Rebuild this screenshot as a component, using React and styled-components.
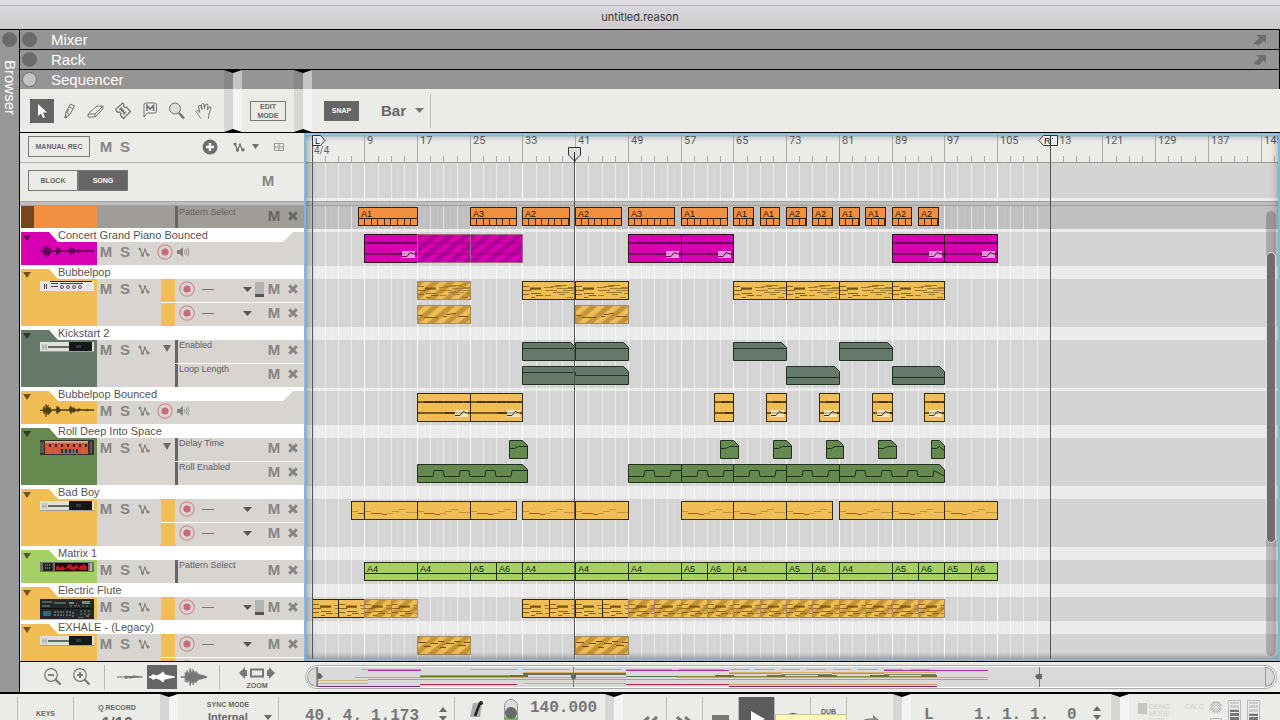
import styled, { createGlobalStyle, css } from "styled-components";

const BAR = 6.59;
const ORIGIN = 6.1;
const xAt = (bar) => Math.floor(ORIGIN + (bar - 1) * BAR);

const YELLOW = "#f0be55";
const MAGENTA = "#d900b3";
const ORANGE = "#f28f40";
const SLATE = "#65796a";
const GREEN = "#65894e";
const LIME = "#a5d164";

// one clip for each step of bars between from and to
const every = (from, to, step, extra = {}) => {
  const list = [];
  for (let b = from; b < to; b += step) list.push({ s: b, e: Math.min(b + step, to), ...extra });
  return list;
};

const patternClips = [
  [8, 17, "A1"], [25, 32, "A3"], [33, 40, "A2"], [41, 48, "A2"], [49, 56, "A3"], [57, 64, "A1"],
  [65, 68, "A1"], [69, 72, "A1"], [73, 76, "A2"], [77, 80, "A2"], [81, 84, "A1"], [85, 88, "A1"],
  [89, 92, "A2"], [93, 96, "A2"],
].map(([s, e, label]) => ({ s, e, label, ticks: true }));

const matrixClips = [
  [9, 17, "A4"], [17, 25, "A4"], [25, 29, "A5"], [29, 33, "A6"], [33, 41, "A4"], [41, 49, "A4"],
  [49, 57, "A4"], [57, 61, "A5"], [61, 65, "A6"], [65, 73, "A4"], [73, 77, "A5"], [77, 81, "A6"],
  [81, 89, "A4"], [89, 93, "A5"], [93, 97, "A6"], [97, 101, "A5"], [101, 105, "A6"],
].map(([s, e, label]) => ({ s, e, label }));

const tracks = [
  {
    name: "Concert Grand Piano Bounced", color: MAGENTA, kind: "audio", device: "wave",
    lanes: [{ clips: [
      { s: 9, e: 17, art: "audio", fade: true },
      ...every(17, 33, 8, { art: "audio", muted: true }),
      ...every(49, 65, 8, { art: "audio", fade: true }),
      ...every(89, 105, 8, { art: "audio", fade: true }),
    ] }],
  },
  {
    name: "Bubbelpop", color: YELLOW, kind: "note", device: "synth",
    lanes: [
      { level: true, clips: [
        { s: 17, e: 25, art: "dense", muted: true },
        ...every(33, 49, 8, { art: "dense" }),
        ...every(65, 97, 8, { art: "dense" }),
      ] },
      { clips: [{ s: 17, e: 25, art: "sparse", muted: true }, { s: 41, e: 49, art: "sparse", muted: true }] },
    ],
  },
  {
    name: "Kickstart 2", color: SLATE, kind: "auto", device: "rack", arrow: true,
    lanes: [
      { label: "Enabled", clips: [
        { s: 33, e: 41, curve: [[0, 6], [1, 6]] }, { s: 41, e: 49, curve: [[0, 6], [1, 6]] },
        { s: 65, e: 73, curve: [[0, 6], [1, 6]] }, { s: 81, e: 89, curve: [[0, 6], [1, 6]] },
      ] },
      { label: "Loop Length", clips: [
        { s: 33, e: 49, curve: [[0, 6], [0.5, 6], [0.5, 9], [1, 9]] },
        { s: 73, e: 81, curve: [[0, 11], [1, 11]] }, { s: 89, e: 97, curve: [[0, 11], [1, 11]] },
      ] },
    ],
  },
  {
    name: "Bubbelpop Bounced", color: YELLOW, kind: "audio", device: "wave",
    lanes: [{ clips: [
      ...every(17, 33, 8, { art: "audio", fade: true }),
      { s: 62, e: 65, art: "audio" },
      ...[70, 78, 86, 94].map((s) => ({ s, e: s + 3, art: "audio", fade: true })),
    ] }],
  },
  {
    name: "Roll Deep Into Space", color: GREEN, kind: "auto", device: "red", arrow: true,
    lanes: [
      { label: "Delay Time", clips: [
        ...[31, 63, 71, 79, 87].map((s) => ({ s, e: s + 2.7, curve: [[0, 8], [0.3, 8], [0.5, 6], [1, 6]] })),
        { s: 95, e: 97, curve: [[0, 8], [0.4, 8], [0.6, 6], [1, 11]] },
      ] },
      { label: "Roll Enabled", clips: [
        { s: 17, e: 33.7, pulses: 4 },
        ...every(49, 81, 8, { pulses: 2 }),
        { s: 81, e: 97, pulses: 4, tail: true },
      ] },
    ],
  },
  {
    name: "Bad Boy", color: YELLOW, kind: "note", device: "rack",
    lanes: [
      { clips: [
        { s: 7, e: 9, art: "bass" }, ...every(9, 32, 8, { art: "bass" }), ...every(33, 49, 8, { art: "bass" }),
        ...every(57, 80, 8, { art: "bass" }), ...every(81, 105, 8, { art: "bass" }),
      ] },
      { clips: [] },
    ],
  },
  {
    name: "Matrix 1", color: LIME, kind: "auto", device: "matrix",
    lanes: [{ label: "Pattern Select", clips: matrixClips }],
  },
  {
    name: "Electric Flute", color: YELLOW, kind: "note", device: "modules",
    lanes: [{ level: true, clips: [
      ...every(1, 9, 4, { art: "dense" }), ...every(9, 17, 4, { art: "dense", muted: true }),
      ...every(33, 49, 4, { art: "dense" }), ...every(49, 97, 4, { art: "dense", muted: true }),
    ] }],
  },
  {
    name: "EXHALE - (Legacy)", color: YELLOW, kind: "note", device: "rack",
    lanes: [
      { clips: [{ s: 17, e: 25, art: "chords", muted: true }, { s: 41, e: 49, art: "chords", muted: true }] },
      { clips: [], empty: true },
    ],
  },
];

// x1, x2, y, colour, thickness
const overviewLines = [
  ...[[362, 421], [471, 517], [523, 570], [575, 621], [626, 672], [678, 724], [730, 749], [755, 774], [781, 800], [807, 826], [833, 851], [858, 877], [884, 903], [910, 930]]
    .map(([a, b]) => [a, b, 2, "#d99a68"]),
  [368, 421, 3, "#b52ba0"], [626, 729, 3, "#b52ba0"], [884, 988, 3, "#b52ba0"],
  [523, 626, 5, "#d8b06a"], [729, 936, 5, "#d8b06a"],
  [523, 626, 6, "#5f7468", 2], [729, 781, 6, "#8b9a90"], [832, 884, 6, "#8b9a90"], [781, 832, 7, "#76867c"], [884, 936, 7, "#76867c"],
  [420, 523, 8, "#a89a3c"], [626, 936, 9, "#8e8a30"], [510, 528, 8, "#77721e", 2],
  [715, 734, 8, "#77721e", 2], [767, 785, 8, "#77721e", 2], [818, 837, 8, "#77721e", 2], [870, 889, 8, "#77721e", 2], [921, 937, 8, "#77721e", 2],
  [355, 626, 10, "#c9ac62"], [677, 988, 10, "#c9ac62"], [420, 523, 9, "#77721e"], [626, 678, 9, "#4c7a45"],
  [368, 988, 12, "#94b36d"], [317, 368, 13, "#cdb57c"], [317, 368, 16, "#cdb57c"],
  [523, 626, 16, "#d8b06a"], [420, 517, 17, "#b01f55"], [626, 729, 17, "#c01f45"], [729, 937, 17, "#c9a060"],
  [317, 420, 19, "#801c82"], [729, 937, 19, "#8e1b62"],
];

const Svg = ({ w, h, children, ...rest }) => (
  <svg width={w} height={h} viewBox={`0 0 ${w} ${h}`} aria-hidden="true" {...rest}>{children}</svg>
);

const Caret = ({ w = 9, h = 5, color = "#6b6b6b" }) => (
  <Svg w={w} h={h}><path d={`M0 0H${w}L${w / 2} ${h}Z`} fill={color} /></Svg>
);

const RecordIcon = () => (
  <Svg w={16} h={16}>
    <circle cx="8" cy="8" r="7.200" fill="none" stroke="#d28c93" strokeWidth="1.200" />
    <circle cx="8" cy="8" r="3.600" fill="#c66b7b" />
  </Svg>
);

const AutomationIcon = ({ color = "#858585" }) => (
  <Svg w={12} h={12}>
    <path d="M2 3L4.500 9.500L7 3.500L9.500 9.500" fill="none" stroke={color} strokeWidth="1.200" />
    <g fill={color}><circle cx="2" cy="3" r="1.500" /><circle cx="4.500" cy="9.300" r="1.500" /><circle cx="7" cy="3.500" r="1" /><circle cx="10" cy="8.800" r="1.600" /></g>
  </Svg>
);

const CrossIcon = () => (
  <Svg w={10} h={10}><path d="M1.200 1.200L8.800 8.800M8.800 1.200L1.200 8.800" stroke="currentColor" strokeWidth="3" /></Svg>
);

const SpeakerIcon = () => (
  <Svg w={14} h={12}>
    <path d="M1 4H3.500L7 1V11L3.500 8H1Z" fill="#858585" />
    <path d="M8.500 4Q9.500 6 8.500 8M10 2.500Q12 6 10 9.500M11.800 1.500Q14 6 11.800 10.500" fill="none" stroke="#9a9a9a" />
  </Svg>
);

const PopOutIcon = () => (
  <Svg w={14} h={11}><path d="M3 1H13V9L10.500 6.500L6 11L0 10L6.500 3.800Z" fill="#6d6d6d" /></Svg>
);

const StepArrows = () => (
  <Svg w={10} h={14}><path d="M1 5L5 0L9 5ZM1 9H9L5 14Z" fill="#6b6b6b" /></Svg>
);

const wavePath = "M0 7H3L4 3L5 7L6 1L7 5L8 2L9 6L10 4L11 6.500H16L17 3L18 5L19 4L20 6.500H29L30 4L31 3L32 5L34 4.500L35 6L37 6.500L39 5.500L41 6.500H46L47 6L49 6.500H54V7.500H49L47 8L45 7.500H40L38 8.500L36 7.500L34 9.500L32 8.500L31 11L30 9L29 7.500H21L19 9.500L18 9L17 11L16 7.500H12L10 10L8 12L7 9L6 14L5 8L4 11L3 7.500H0Z";

const DeviceArt = ({ type, color }) => {
  switch (type) {
    case "wave":
      return <Svg w={54} h={15}><path d={wavePath} fill={color === MAGENTA ? "#5e0b55" : "#4e3b12"} stroke={color === MAGENTA ? "#5e0b55" : "#4e3b12"} strokeWidth=".5" /></Svg>;
    case "synth":
      return (
        <Svg w={54} h={10}>
          <rect width="54" height="10" fill="#e8e6e2" />
          <path d="M10 0H52V1H10Z" fill="#232323" />
          <path d="M4 3H5V8H4ZM6 3H7V8H6ZM11 2H18V3H11ZM11 5H18V6H11ZM20 2H43V3H20Z" fill="#444" />
          {[22, 28, 34, 40].map((x) => <circle key={x} cx={x} cy="6" r="1.500" fill="none" stroke="#555" />)}
        </Svg>
      );
    case "red":
      return (
        <Svg w={54} h={15}>
          <rect width="54" height="15" fill="#37302c" />
          <rect x="5" y="1" width="43" height="13" fill="#d6583a" />
          <path d="M5 1H48V3H5Z" fill="#dd9a86" />
          {[9, 15, 21, 27, 33, 39, 45].map((x) => <path key={x} d={`M${x} 4h2v3h-2z`} fill="#4b2119" />)}
          <path d="M21 9H38V13H21Z" fill="#33302f" />
          <path d="M10 9V14M15 9V14M43 9V14M1 2V13M3 2V13M51 2V13" stroke="#8d7c70" />
          <path d="M24 9V13M28 9V13M32 9V13M35 9V13" stroke="#b9b3ac" />
        </Svg>
      );
    case "matrix":
      return (
        <Svg w={54} h={10}>
          <rect width="54" height="10" fill="#6f726c" />
          <rect x="3" y="1" width="10" height="8" fill="#242424" />
          <rect x="15" y="1" width="33" height="8" fill="#2a0508" />
          <path d="M16 8V5L19 3V6L23 4L25 7L28 3L31 2L33 5L36 3L40 6V4L44 2L47 5V8H40L38 6L35 8H31L28 6L24 8Z" fill="#c31524" />
          <path d="M5 3H11M5 6H11" stroke="#aaa" strokeDasharray="1 1" />
          <path d="M50 1H52V9H50Z" fill="#b4b4ae" />
        </Svg>
      );
    case "modules":
      return (
        <Svg w={54} h={20}>
          <rect width="54" height="20" fill="#23292a" />
          <path d="M2 2H12V4H2ZM14 3H26V5H14ZM2 6H10V8H2Z" fill="#506258" />
          <path d="M29 3H34V5H29ZM42 2H50V5H42Z" fill="#7c8a83" />
          <path d="M1 9.500H53" stroke="#0d0f10" />
          <path d="M3 12H11V17H3Z" fill="#34637e" />
          <path d="M14 13H24M14 16H24M27 12V18M30 12V18M33 13V18" stroke="#9aa69f" strokeDasharray="2 1" />
          <path d="M36 4H37V7H36ZM46 16H49V18H46ZM38 18H44V19H38Z" fill="#c23a36" />
          <path d="M40 12H50M40 15H50M30 7H50" stroke="#5e9277" strokeDasharray="2 2" />
        </Svg>
      );
    default:
      return (
        <Svg w={54} h={10}>
          <rect width="54" height="10" fill="#e0dfdb" />
          <path d="M8 5H29" stroke="#3d4341" strokeWidth="1.500" />
          <path d="M3 2V8M6 2V8M2 5H7" stroke="#a3a3a0" />
          <rect x="29" width="23" height="9" fill="#161818" />
          <rect x="36" y="3" width="5" height="3" fill="#2e3d49" />
          <path d="M0 9.500H54" stroke="#9a9a96" />
        </Svg>
      );
  }
};

const ClipArt = ({ clip, width, color }) => {
  const dark = color === MAGENTA ? "#63004f" : "#4a3410";
  if (clip.art === "audio") {
    return (
      <Svg w={width} h={27}>
        <path d={`M0 8H${width}M0 19H${width}`} stroke={dark} strokeWidth={clip.muted ? 1 : 1.5} opacity={clip.muted ? 0.5 : 1} />
        {!clip.muted && <path d={`M6 8H${width}M${width * 0.5} 19h12`} stroke={dark} strokeWidth="2" strokeDasharray="9 1" />}
        {clip.fade && (
          <g>
            <rect x={width - 17} y="16" width="13" height="7" fill="#fff" opacity="0.6" />
            <path d={`M${width - 17} 21.500h5l3 -4l6 2`} fill="none" stroke={dark} />
          </g>
        )}
      </Svg>
    );
  }
  if (clip.art === "dense") {
    return (
      <Svg w={width} h={17} opacity={clip.muted ? 0.7 : 0.85}>
        <path d="M0 4.500H6M0 8.500H8M7 7H18M0 12.500H6M8 11.500H18M8 15.500H12M13 13.500H20" stroke="#6e5013" strokeWidth="1" />
        <path d="M7 6.500H18" stroke="#5a3f0c" strokeWidth="2" />
        <path d="M21 5.500H30M22 8.500H34M22 13.500H28M28 4.500H38M32 3.500H44M30 10.500H46M34 6.500H52M40 8.500H52M36 12.500H42M45 5.500H52M44 15.500H50M48 11.500H53" stroke="#92702a" />
      </Svg>
    );
  }
  if (clip.art === "sparse" || clip.art === "chords") {
    return (
      <Svg w={width} h={17}>
        {clip.art === "sparse"
          ? <path d="M0 9.500H5M6 11.500H20M25 10.500H29M28 8.500H33M33 7.500H38M40 10.500H50" stroke="#7a5a1a" />
          : <path d="M0 5.500H8M6 9.500H13M13 6.500H20M20 4.500H26M22 10.500H28M28 6.500H36M36 4.500H42M40 8.500H48M46 5.500H53" stroke="#6a4d14" />}
      </Svg>
    );
  }
  return (
    <Svg w={width} h={17}>
      <path d="M0 9.500H6M22 11.500H28M27 9.500H34M33 7.500H40M41 10.500H52" stroke="#c39540" />
      <path d="M6 11.500H16L18 12.500H22" fill="none" stroke="#8a6420" />
    </Svg>
  );
};

const curvePoints = (clip, width) => {
  if (clip.curve) return clip.curve.map(([x, y]) => `${x * width},${y + 0.5}`).join(" ");
  const step = 26;
  let points = "0,12.500";
  for (let i = 0; i < clip.pulses; i++) {
    const a = 16 + i * step;
    points += ` ${a},12.500 ${a + 1},6.500`;
    if (i < clip.pulses - 1) points += ` ${a + 10},6.500 ${a + 11},12.500`;
  }
  return `${points} ${width},${clip.tail ? 12.5 : 6.5}`;
};

const AutomationArt = ({ clip, width, color, cut }) => (
  <Svg w={width} h={19}>
    <path d={cut ? `M.5 .5H${width - 5.5}L${width - 0.5} 5.500V18.500H.5Z` : `M.5 .5H${width - 0.5}V18.500H.5Z`} fill={color} stroke="#22301f" />
    <polyline points={curvePoints(clip, width)} fill="none" stroke="#22301f" />
  </Svg>
);

const TimelineClip = ({ clip, color, tall, cut }) => {
  const left = xAt(clip.s);
  const width = xAt(clip.e) - left + 1;
  if (clip.curve || clip.pulses) {
    return (
      <BareClip style={{ left, width }}>
        <AutomationArt clip={clip} width={width} color={color} cut={cut} />
      </BareClip>
    );
  }
  return (
    <Clip $color={color} $tall={tall} $muted={clip.muted} style={{ left, width }}>
      {clip.label
        ? <><ClipLabel>{clip.label}</ClipLabel><ClipFoot $ticks={clip.ticks} /></>
        : <ClipArt clip={clip} width={width} color={color} />}
    </Clip>
  );
};

const LaneTail = ({ track }) => (
  <>
    <LetterButton aria-label={`Mute lane of ${track}`}>M</LetterButton>
    <IconButton aria-label={`Delete lane of ${track}`}><CrossIcon /></IconButton>
  </>
);

const Track = ({ track }) => (
  <TrackRow>
    <ColorCell $color={track.color}>
      <FoldButton aria-label={`Fold ${track.name}`}><Caret w={8} h={6} color="rgba(0,0,0,.55)" /></FoldButton>
      <Device><DeviceArt type={track.device} color={track.color} /></Device>
    </ColorCell>
    <TrackName>{track.name}</TrackName>
    {track.kind === "audio" && <Notch />}
    <Controls>
      <LetterButton aria-label={`Mute ${track.name}`}>M</LetterButton>
      <LetterButton aria-label={`Solo ${track.name}`}>S</LetterButton>
      <IconButton aria-label={`Automation of ${track.name}`}><AutomationIcon /></IconButton>
      {track.kind === "audio" && (
        <AudioControls>
          <IconButton aria-label={`Record ${track.name}`}><RecordIcon /></IconButton>
          <IconButton aria-label={`Monitor ${track.name}`}><SpeakerIcon /></IconButton>
        </AudioControls>
      )}
    </Controls>
    {track.kind !== "audio" && (
      <Lanes>
        {track.lanes.map((lane, i) => (
          <LaneRow key={i}>
            <Strip $color={track.kind === "note" ? track.color : null}>
              {track.arrow && i === 0 && <Caret w={8} h={7} />}
            </Strip>
            {track.kind === "note" ? (
              <NoteLane>
                <IconButton aria-label={`Record lane ${i + 1} of ${track.name}`}><RecordIcon /></IconButton>
                {!lane.empty && (
                  <>
                    <Dash />
                    <Caret color="#555" />
                    {lane.level ? <Level /> : <span />}
                    <LaneTail track={track.name} />
                  </>
                )}
              </NoteLane>
            ) : (
              <AutomationLane>
                <LaneLabel>{lane.label}</LaneLabel>
                <LaneTail track={track.name} />
              </AutomationLane>
            )}
          </LaneRow>
        ))}
      </Lanes>
    )}
  </TrackRow>
);

const Ruler = () => {
  const ticks = [];
  for (let b = 1; b <= 147; b += 2) ticks.push(b);
  return (
    <RulerBar>
      {ticks.map((b) => {
        const major = (b - 1) % 8 === 0;
        return (
          <Tick key={b} $major={major} style={{ left: xAt(b) }}>{major && b > 1 ? b : ""}</Tick>
        );
      })}
      <Signature>4/4</Signature>
    </RulerBar>
  );
};

const gridBars = Array.from({ length: 111 }, (_, i) => i + 1);

const Timeline = () => (
  <TimelinePane>
    <Ruler />
    <BlockLane />
    <SplitBar />
    <GridLines aria-hidden="true">
      {gridBars.map((b) => (
        <rect key={b} x={xAt(b)} y="0" width="1" height="100%" fill="#fff" opacity={(b - 1) % 8 === 0 ? 0.9 : b % 2 ? 0.5 : 0.1} />
      ))}
    </GridLines>
    <FoldedLane>{patternClips.map((c) => <TimelineClip key={c.s} clip={c} color={ORANGE} />)}</FoldedLane>
    {tracks.map((t) => (
      <TimelineTrack key={t.name} $audio={t.kind === "audio"}>
        {t.lanes.map((lane, i) => (
          <TimelineLane key={i} $audio={t.kind === "audio"}>
            {lane.clips.map((c, j) => (
              <TimelineClip
                key={c.s} clip={c} color={t.color} tall={t.kind === "audio"}
                cut={!c.pulses || j === 0 || j === lane.clips.length - 1}
              />
            ))}
          </TimelineLane>
        ))}
      </TimelineTrack>
    ))}
    <InnerShade />
    <MarkerLine style={{ left: xAt(1) }} />
    <MarkerLine style={{ left: xAt(113) }} />
    <MarkerLine $playhead style={{ left: xAt(41) - 1 }} />
    <LocatorFlag style={{ left: xAt(1) }}>
      <Svg w={14} h={11}>
        <path d="M.5 .5H8.500L13 5.500L8.500 10.500H.5Z" fill="#eee" stroke="#333" />
        <text x="3" y="9" fontSize="9" fill="#222">L</text>
      </Svg>
    </LocatorFlag>
    <LocatorFlag style={{ left: xAt(113) - 12 }}>
      <Svg w={20} h={11}>
        <path d="M19.500 .5H5.500L1 5.500L5.500 10.500H19.500Z" fill="#eee" stroke="#333" />
        <text x="6" y="9" fontSize="9" fill="#222">R</text>
        <path d="M12.500 1V10M14 3.500H15" stroke="#333" />
      </Svg>
    </LocatorFlag>
    <PlayheadFlag style={{ left: xAt(41) - 7 }}>
      <Svg w={13} h={15}>
        <path d="M.5 .5H12.500V8L6.500 14L.5 8Z" fill="#dcdcdc" stroke="#333" />
        <path d="M6.500 5V15" stroke="#222" />
      </Svg>
    </PlayheadFlag>
    <Scrollbar><ScrollThumb /></Scrollbar>
  </TimelinePane>
);

const Toolbar = () => (
  <SequencerTop>
    <Section $width={204}>
      <SectionHead><Dot $open />Sequencer</SectionHead>
      <Tools>
        <ToolButton $active aria-label="Selection tool">
          <Svg w={24} h={24}><path d="M8 5V17L11 14.500L13 19L15 18L13 13.500H17Z" fill="#fff" /></Svg>
        </ToolButton>
        <ToolButton aria-label="Pencil tool">
          <Svg w={24} h={24} fill="none" stroke="#737373"><path d="M8 19L9 13L13.500 5L17.500 7L13 15.500ZM9 13L13 15.500M12 7.500L16 10M12 10L10.500 13" /><path d="M8 19L8.500 16.500L10 17.500Z" fill="#737373" /></Svg>
        </ToolButton>
        <ToolButton aria-label="Eraser tool">
          <Svg w={24} h={24} fill="none" stroke="#737373"><path d="M4 15L13 7H19L11 15ZM4 15V18H11V15M11 18L19 10V7" /></Svg>
        </ToolButton>
        <ToolButton aria-label="Razor tool">
          <Svg w={24} h={24} fill="none" stroke="#737373" strokeWidth="1.200"><path d="M11.500 4L13 5.500L12.500 7L14 8.500L15.500 8L19.500 12.500L12.500 19.500L9.500 16L10 14.500L8.500 13L7 13.500L4.500 10.500ZM9 9L14 15" /><circle cx="11.500" cy="11.500" r="1" /><path d="M8.500 11L11 8.500M12 15.500L15 12.500" /></Svg>
        </ToolButton>
        <ToolButton aria-label="Mute tool">
          <Svg w={24} h={24} fill="none" stroke="#737373"><path d="M7.500 4H16.500Q18.500 4 18.500 6V12Q18.500 14 16.500 14H9.500L6 18V6Q6 4 7.500 4Z" /><path d="M9 12V6.500L12.200 10L15.500 6.500V12" strokeWidth="1.600" /></Svg>
        </ToolButton>
        <ToolButton aria-label="Magnifier tool">
          <Svg w={24} h={24} fill="none" stroke="#737373"><circle cx="10" cy="9.500" r="5.500" fill="#dcdcd8" /><path d="M14 14L19 19.500" strokeWidth="2.600" /></Svg>
        </ToolButton>
        <ToolButton aria-label="Hand tool">
          <Svg w={24} h={24} fill="none" stroke="#737373"><path d="M8.500 19.500C7.500 16.500 5 14.500 4 12.500C4.500 11 6 11.500 8 13.500L6.500 8Q6.500 6 8.500 6.500L10 10.500L9.500 5.500Q10.500 3.500 12 5L12.500 10L13.500 5.500Q15 4 16 6L15.500 11L17 8Q19 7 19 9L17 15L16.500 19.500" /></Svg>
        </ToolButton>
      </Tools>
    </Section>
    <Fold />
    <Section $width={52}>
      <SectionHead />
      <Tools $center><OutlineButton $wide>EDIT<br />MODE</OutlineButton></Tools>
    </Section>
    <Fold />
    <Section>
      <SectionHead $end />
      <Tools $snap>
        <DarkButton>SNAP</DarkButton>
        <SnapField>
          <SnapSelect aria-label="Snap value" defaultValue="Bar"><option>Bar</option></SnapSelect>
          <Caret color="#777" />
        </SnapField>
      </Tools>
    </Section>
  </SequencerTop>
);

const Glass = ({ plus }) => (
  <Svg w={20} h={20} fill="none" stroke="#777">
    <circle cx="8" cy="8" r="6.300" strokeWidth="1.200" /><path d="M5 8H11" strokeWidth="1.800" />
    {plus && <path d="M8 5V11" strokeWidth="1.800" />}
    <path d="M12.500 12.500L17.500 17.500" strokeWidth="2.200" />
  </Svg>
);

const ZoomBar = () => (
  <ZoomRow>
    <ZoomTools>
      <IconButton aria-label="Zoom out"><Glass /></IconButton>
      <IconButton aria-label="Zoom in"><Glass plus /></IconButton>
    </ZoomTools>
    <Rule />
    <WaveTools>
      <WaveButton aria-label="Small waveforms"><Svg w={28} h={16}><path d="M1 7.500H8L10 6.500L12 7H16L17 6.500L27 7.500V8.500L17 9L15 9.500L12 9L10 10L8 8.500H1Z" fill="#777" /></Svg></WaveButton>
      <WaveButton $active aria-label="Medium waveforms"><Svg w={28} h={16}><path d="M1 7H3L5 5L8 6.500L12 5L15 2.500L17 5.500L27 7.500V8.500L17 10.500L15 13.500L12 11L8 9.500L5 11L3 9H1Z" fill="#fff" /></Svg></WaveButton>
      <WaveButton aria-label="Large waveforms"><Svg w={28} h={20}><path d="M1 9.500H5V5L6 8L7 3L9 7L10 1L12 6L13 2L15 6L16 4L18 7L27 9.500V10.500L18 13L16 16L15 14L13 18L12 14L10 19L9 13L7 16L6 12L5 15V10.500H1Z" fill="#777" stroke="#777" strokeWidth=".5" /></Svg></WaveButton>
    </WaveTools>
    <Rule />
    <ZoomButton>
      <Svg w={36} h={12}><path d="M0 6L6 0V3H8V9H6V12ZM36 6L30 0V3H28V9H30V12Z" fill="#777" /><rect x="12" y="2.500" width="12" height="7" fill="none" stroke="#777" strokeWidth="2" /></Svg>
      ZOOM
    </ZoomButton>
    <Overview>
      <OverviewCap />
      <OverviewMap aria-hidden="true">
        {overviewLines.map(([a, b, y, color, h = 1], i) => (
          <rect key={i} x={a - 317} y={y} width={b - a} height={h} fill={color} />
        ))}
        <path d="M.5 0V20M256.500 0V20M722.500 0V20" stroke="#777" />
        <path d="M1 6H3L6 9.500L3 12H1ZM254 7H259V11L256.500 13L254 11ZM718 9.500L720 7H725V12H720Z" fill="#666" />
      </OverviewMap>
      <OverviewCap $right />
    </Overview>
  </ZoomRow>
);

const Transport = () => (
  <TransportBar>
    <Panel $width={160}>
      <Group $width={18} />
      <Group $width={56} $top={12}><Tiny>KEYS</Tiny></Group>
      <Group $width={86} $top={6} $last><Tiny>Q RECORD</Tiny><QuantizeValue>1/16</QuantizeValue></Group>
    </Panel>
    <Fold $short />
    <Panel $width={427}>
      <Group $width={101}>
        <Tiny>SYNC MODE</Tiny>
        <SyncRow>
          <SyncSelect aria-label="Sync mode" defaultValue="Internal"><option>Internal</option></SyncSelect>
          <Caret w={8} h={5} />
        </SyncRow>
      </Group>
      <PositionGroup>
        <Digits>40.</Digits><Digits>4.</Digits><Digits>1.173</Digits><StepArrows />
      </PositionGroup>
      <TempoGroup>
        <ClickButton aria-label="Click">
          <Svg w={16} h={22}><path d="M4 4H13L11 18H1Z" fill="#aaa" /><path d="M6 17L11 4" stroke="#222" strokeWidth="2.500" /><circle cx="12" cy="4" r="2" fill="#222" /></Svg>
        </ClickButton>
        <IconButton aria-label="Metronome level">
          <Svg w={14} h={26}><rect x=".5" y=".5" width="13" height="34" rx="6.500" fill="#ddd" stroke="#999" /><path d="M1 18H13V26H1Z" fill="#6fbf58" /><circle cx="7" cy="14" r="6" fill="#6a6a6a" /></Svg>
        </IconButton>
        <Digits>140.000</Digits>
      </TempoGroup>
    </Panel>
    <Fold $short />
    <Panel $width={270}>
      <Group $width={44} $top={19} $end><Svg w={18} h={14}><path d="M9 1L2 7L9 13M17 1L10 7L17 13" fill="none" stroke="#777" strokeWidth="3" /></Svg></Group>
      <Group $width={36} $top={19}><Svg w={18} h={14}><path d="M1 1L8 7L1 13M9 1L16 7L9 13" fill="none" stroke="#777" strokeWidth="3" /></Svg></Group>
      <Group $width={36} $top={18}><StopSquare /></Group>
      <Group $width={36} $top={14} $dark><Svg w={16} h={22}><path d="M2 0L16 8L2 16Z" fill="#fff" /></Svg></Group>
      <Group $width={36} $top={16}>
        <Svg w={16} h={16}><circle cx="8" cy="8" r="8" fill="#b31f2c" /></Svg>
        <Tooltip />
      </Group>
      <Group $width={36} $top={10}><Tiny>DUB</Tiny></Group>
      <Group $width={46} $top={17} $last><Svg w={22} h={14}><path d="M2 13Q3 6 10 6H16" fill="none" stroke="#888" strokeWidth="3" /><path d="M14 1L20 6L14 11Z" fill="#888" /></Svg></Group>
    </Panel>
    <Fold $short />
    <Panel $width={200}>
      <LoopDigits><Digits>L</Digits><Digits>1.</Digits><Digits>1.</Digits><Digits>1.</Digits><Digits>0</Digits><StepArrows /></LoopDigits>
    </Panel>
    <Fold $short />
    <Panel>
      <Status>
        <StatusLamp />
        <StatusText>DEMO<br />MODE<br />DISK</StatusText>
        <StatusText>CALC</StatusText>
        <Svg w={14} h={26}><circle cx="7" cy="7" r="6" fill="#bdbdba" /><path d="M7 1V13M1 7H13M3 3L11 11M11 3L3 11" stroke="#ebebe7" /><rect x="1.500" y="18.500" width="11" height="12" fill="none" stroke="#bbb" /></Svg>
        <Meter $peak={9} /><Meter $peak={13} />
      </Status>
    </Panel>
  </TransportBar>
);

const App = () => (
  <>
    <GlobalStyle />
    <Window>
      <TitleBar>untitled.reason</TitleBar>
      <Workspace>
        <BrowserRail><Dot />Browser</BrowserRail>
        <Main>
          <StripBar><Dot />Mixer<PopOut aria-label="Detach mixer"><PopOutIcon /></PopOut></StripBar>
          <StripBar><Dot />Rack<PopOut aria-label="Detach rack"><PopOutIcon /></PopOut></StripBar>
          <Toolbar />
          <Editor>
            <TrackList>
              <ListHead>
                <OutlineButton>MANUAL REC</OutlineButton>
                <HeadLetters>
                  <LetterButton aria-label="Mutes off">M</LetterButton>
                  <LetterButton aria-label="Solos off">S</LetterButton>
                </HeadLetters>
                <HeadTools>
                  <IconButton aria-label="Add track"><Svg w={16} h={16}><circle cx="8" cy="8" r="7.500" fill="#6e6e6e" /><path d="M8 4V12M4 8H12" stroke="#fff" strokeWidth="2.400" /></Svg></IconButton>
                  <IconButton aria-label="Automation menu"><AutomationIcon color="#6e6e6e" /><Caret w={7} h={5} /></IconButton>
                  <IconButton aria-label="Grid view"><Svg w={10} h={10} fill="none" stroke="#999"><path d="M.5 1.500H9.500V8.500H.5ZM5 1.500V8.500M.5 5H9.500" /></Svg></IconButton>
                </HeadTools>
              </ListHead>
              <ModeRow>
                <Toggle><ToggleItem>BLOCK</ToggleItem><ToggleItem $on>SONG</ToggleItem></Toggle>
                <LetterButton aria-label="Mute blocks">M</LetterButton>
              </ModeRow>
              <SplitBar />
              <FoldedTrack>
                <FoldedColor />
                <FoldedBody>
                  <LaneLabel>Pattern Select</LaneLabel>
                  <LaneTail track="pattern track" />
                </FoldedBody>
              </FoldedTrack>
              {tracks.map((t) => <Track key={t.name} track={t} />)}
            </TrackList>
            <Timeline />
          </Editor>
          <ZoomBar />
        </Main>
      </Workspace>
      <Transport />
    </Window>
  </>
);

const GlobalStyle = createGlobalStyle`
  * { box-sizing: border-box; }
  body { margin: 0; overflow: hidden; font-family: "Liberation Sans", Arial, sans-serif; color: #666; }
  button, select { font: inherit; color: inherit; border: 0; padding: 0; background: none; cursor: pointer; }
  svg { display: block; flex: none; }
`

const Window = styled.div`
  height: 100vh;
  display: flex;
  flex-direction: column;
  overflow: hidden;
  background: #ebebe7;
`

const TitleBar = styled.header`
  flex: 0 0 30px;
  padding-top: 6px;
  text-align: center;
  font-family: Inter, sans-serif;
  font-size: 11px;
  line-height: 22px;
  color: #333;
  border-bottom: 1px solid #000;
  background: linear-gradient(#dfdce1 0 5px, #b9b7bb 5px 6px, #dad8dc 6px, #cdcbce 100%);
`

const Workspace = styled.div`
  flex: 1;
  min-height: 0;
  display: flex;
  border-bottom: 2px solid #000;
`

const BrowserRail = styled.aside`
  flex: 0 0 20px;
  display: flex;
  align-items: center;
  gap: 13px;
  padding-top: 2px;
  writing-mode: vertical-rl;
  font-size: 15px;
  line-height: 18px;
  color: #fff;
  background: #979797;
  border-right: 1px solid #000;
`

const Main = styled.main`
  flex: 1;
  min-width: 0;
  display: flex;
  flex-direction: column;
`

const Dot = styled.span`
  flex: none;
  width: 15px;
  height: 15px;
  border-radius: 50%;
  background: ${({ $open }) => ($open ? "#c4c4c4" : "#6b6b6b")};
  border: 1px solid #6b6b6b;
`

const headStyle = css`
  display: flex;
  align-items: center;
  gap: 14px;
  padding-left: 2px;
  font-size: 15px;
  line-height: 17px;
  padding-bottom: 1px;
  color: #fff;
  background: #959595;
`

const StripBar = styled.div`
  ${headStyle}
  flex: 0 0 20px;
  border-bottom: 1px solid #000;
  border-right: 1px solid #000;
`

const PopOut = styled.button`
  margin-left: auto;
  margin-right: 12px;
`

const SequencerTop = styled.div`
  flex: 0 0 63px;
  display: flex;
  border-bottom: 1px solid #000;
`

const Section = styled.section`
  flex: ${({ $width }) => ($width ? `0 0 ${$width}px` : "1")};
  display: flex;
  flex-direction: column;
`

const SectionHead = styled.div`
  ${headStyle}
  height: 19px;
  border-right: ${({ $end }) => ($end ? "1px solid #000" : "0")};
`

const Fold = styled.div`
  flex: 0 0 18px;
  position: relative;
  background: linear-gradient(90deg, rgba(0, 0, 0, .09) 50%, rgba(255, 255, 255, .45) 50%),
    linear-gradient(${({ $short }) => ($short ? "#ebebe7" : "#959595")} 19px, #ebebe7 19px);

  &::before, &::after {
    content: "";
    position: absolute;
    left: 0;
    right: 0;
    height: 3px;
    background: #000;
  }
  &::before {
    top: 0;
    clip-path: polygon(0 0, 100% 0, 50% 100%);
  }
  &::after {
    bottom: 0;
    display: ${({ $short }) => ($short ? "none" : "block")};
    clip-path: polygon(0 100%, 50% 0, 100% 100%);
  }
`

const Tools = styled.div`
  flex: 1;
  display: flex;
  align-items: center;
  justify-content: ${({ $center }) => ($center ? "center" : "flex-start")};
  gap: ${({ $snap }) => ($snap ? "22px" : "3px")};
  padding-left: ${({ $snap, $center }) => ($snap ? "12px" : $center ? "0" : "10px")};
`

const ToolButton = styled.button`
  width: 24px;
  height: 24px;
  background: ${({ $active }) => ($active ? "#656565" : "none")};
`

const OutlineButton = styled.button`
  width: ${({ $wide }) => ($wide ? "36px" : "62px")};
  height: ${({ $wide }) => ($wide ? "20px" : "21px")};
  border: 1px solid #777;
  font-size: 7px;
  line-height: 9px;
  font-weight: 700;
  text-align: center;
`

const DarkButton = styled.button`
  width: 35px;
  height: 20px;
  background: #656565;
  color: #fff;
  font-size: 7px;
  font-weight: 700;
`

const SnapField = styled.div`
  height: 34px;
  display: flex;
  align-items: center;
  gap: 8px;
  padding-right: 6px;
  border-right: 1px solid #bbb;
`

const SnapSelect = styled.select`
  appearance: none;
  width: 26px;
  font-size: 15px;
  font-weight: 700;
`

const Editor = styled.div`
  flex: 1;
  min-height: 0;
  display: grid;
  grid-template-columns: 284px 1fr;
  grid-template-rows: minmax(0, 1fr);
  border-bottom: 1px solid #000;
`

const TrackList = styled.div`
  overflow: hidden;
  background: #fff;
`

const ListHead = styled.div`
  height: 30px;
  display: flex;
  align-items: center;
  gap: 10px;
  padding: 0 20px 2px 8px;
  border-bottom: 1px solid #b5b5b3;
  background: #ebebe7;
`

const HeadLetters = styled.div`
  display: flex;
  gap: 7px;
`

const HeadTools = styled.div`
  margin-left: auto;
  display: flex;
  align-items: center;
  gap: 15px;
`

const ModeRow = styled.div`
  height: 38px;
  display: flex;
  align-items: center;
  justify-content: space-between;
  padding: 0 30px 3px 8px;
  background: #ebebe7;
`

const Toggle = styled.div`
  display: flex;
`

const ToggleItem = styled.button`
  width: 50px;
  height: 21px;
  border: 1px solid #777;
  background: ${({ $on }) => ($on ? "#656565" : "none")};
  color: ${({ $on }) => ($on ? "#fff" : "#666")};
  font-size: 7px;
  font-weight: 700;
`

const SplitBar = styled.div`
  height: 5px;
  position: relative;
  z-index: 2;
  border-top: 1px solid #a5a5a5;
  border-bottom: 1px solid #a0a0a0;
  background: #bdbdbd;
`

const LetterButton = styled.button`
  width: 12px;
  display: flex;
  justify-content: center;
  font-size: 15px;
  line-height: 16px;
  font-weight: 700;
  color: #858585;
`

const IconButton = styled.button`
  display: flex;
  align-items: center;
  justify-content: center;
  gap: 7px;
  color: #858585;
`

const FoldedTrack = styled.div`
  height: 23px;
  display: grid;
  grid-template-columns: 76px 1fr;
  margin-left: 1px;
  border-bottom: 1px solid #fff;
  background: #a09c98;
`

const FoldedColor = styled.div`
  background: linear-gradient(90deg, #78461c 13px, ${ORANGE} 13px);
`

const FoldedBody = styled.div`
  margin-left: 78px;
  display: grid;
  grid-template-columns: 1fr 12px 10px;
  column-gap: 8px;
  align-items: center;
  padding: 1px 6px 4px 1px;
  border-left: 3px solid #666;

  & > button { color: #666; }
`

const TrackRow = styled.div`
  display: grid;
  grid-template-columns: 76px auto 1fr;
  grid-template-rows: 13px auto;
  margin-left: 1px;
`

const ColorCell = styled.div`
  grid-area: 1 / 1 / 3 / 2;
  display: flex;
  align-items: flex-start;
  gap: 9px;
  margin-bottom: 1px;
  padding-left: 2px;
  background: ${({ $color }) => $color};
  clip-path: polygon(0 3px, 28px 3px, 37px 13px, 100% 13px, 100% 100%, 0 100%);
`

const FoldButton = styled.button`
  margin-top: 6px;
`

const Device = styled.div`
  margin-top: 15px;
`

const TrackName = styled.div`
  grid-area: 1 / 1 / 2 / 4;
  padding-left: 37px;
  font-size: 11px;
  line-height: 13px;
  color: #555;
  z-index: 1;
`

const Notch = styled.div`
  grid-area: 1 / 3 / 2 / 4;
  justify-self: end;
  width: 21px;
  margin-top: 3px;
  background: #d8d5d0;
  clip-path: polygon(0 100%, 10px 0, 100% 0, 100% 100%);
`

const Controls = styled.div`
  grid-area: 2 / 2 / 3 / 3;
  display: flex;
  align-items: flex-start;
  gap: 7px;
  min-width: 64px;
  min-height: 23px;
  margin-bottom: 1px;
  padding: 2px 0 0 3px;
  background: #d8d5d0;

  & button {
    height: 16px;
  }

  &:nth-last-child(1) {
    grid-column: 2 / 4;
  }
`

const AudioControls = styled.div`
  display: flex;
  gap: 3px;
`

const Lanes = styled.div`
  grid-area: 2 / 3 / 3 / 4;
`

const LaneRow = styled.div`
  height: 24px;
  display: flex;
  background: #d8d5d0;

  &:last-child {
    border-bottom: 1px solid #fff;
  }
`

const Strip = styled.div`
  flex: 0 0 14px;
  padding: 5px 0 0 2px;
  background: ${({ $color }) => $color || "none"};
  border-bottom: ${({ $color }) => ($color ? "1px solid #fff" : "0")};

  ${LaneRow}:last-child & {
    border-bottom: 0;
  }
`

const laneStyle = css`
  flex: 1;
  display: grid;
  align-items: center;
  padding-bottom: 3px;
  padding-right: 6px;
  border-bottom: 1px solid #fff;

  ${LaneRow}:last-child & {
    border-bottom: 0;
  }
`

const NoteLane = styled.div`
  ${laneStyle}
  grid-template-columns: 16px 1fr 9px 12px 16px 18px;
  padding-left: 4px;

  & > :nth-child(n + 4) { justify-self: end; }
`

const AutomationLane = styled.div`
  ${laneStyle}
  grid-template-columns: 1fr 12px 10px;
  column-gap: 8px;
  padding-left: 4px;
  box-shadow: inset 3px 0 0 #666;
`

const LaneLabel = styled.span`
  align-self: start;
  font-size: 9px;
  line-height: 11px;
  color: #606060;
`

const Dash = styled.span`
  width: 12px;
  height: 1px;
  margin-left: 7px;
  background: #777;
`

const Level = styled.span`
  width: 9px;
  height: 15px;
  border-bottom: 3px solid #555;
  background: #b3b3b3;
`

const TimelinePane = styled.div`
  position: relative;
  min-width: 0;
  overflow: hidden;
  border: 2px solid #79bbe0;
  border-top: 0;
  border-bottom-color: #90b4ce;
  background: #ebebeb;
`

const RulerBar = styled.div`
  position: relative;
  height: 30px;
  border-bottom: 1px solid #999;
  background: linear-gradient(#82b8d4, #d5dfe2 4px, #ebebe7 9px);
  font-family: Roboto, sans-serif;
`

const Tick = styled.span`
  position: absolute;
  bottom: 0;
  height: ${({ $major }) => ($major ? "27px" : "6px")};
  padding-left: 2px;
  border-left: 1px solid #aaa;
  font-size: 11px;
  line-height: 11px;
  color: #5c5c5c;
`

const Signature = styled.span`
  position: absolute;
  left: 8px;
  top: 12px;
  font-size: 10px;
  line-height: 12px;
`

const BlockLane = styled.div`
  height: 38px;
  background: #d4d4d4;
  border-bottom: 3px solid #ebebeb;
`

const GridLines = styled.svg`
  position: absolute;
  z-index: 1;
  left: 0;
  top: 30px;
  width: 100%;
  height: calc(100% - 30px);
`

const FoldedLane = styled.div`
  position: relative;
  height: 23px;
  background: #c0c0c0;

  & > * { margin-top: -1px; }
`

const TimelineTrack = styled.div`
  padding-top: ${({ $audio }) => ($audio ? "3px" : "13px")};
`

const TimelineLane = styled.div`
  position: relative;
  height: ${({ $audio }) => ($audio ? "34px" : "24px")};
  background: #d4d4d4;
`

const BareClip = styled.div`
  position: absolute;
  z-index: 2;
  top: 2px;
`

const Clip = styled.div`
  position: absolute;
  z-index: 2;
  top: 2px;
  height: ${({ $tall }) => ($tall ? "29px" : "19px")};
  overflow: hidden;
  border: 1px solid ${({ $muted }) => ($muted ? "rgba(150, 130, 120, .8)" : "rgba(20, 15, 5, .85)")};
  background: ${({ $color }) => $color};
  ${({ $muted, $tall }) => $muted && css`
    background-image: repeating-linear-gradient(140deg,
      ${$tall ? "rgba(70, 0, 90, .28)" : "rgba(110, 65, 0, .34)"} 0 3px, transparent 5px 8px,
      ${$tall ? "rgba(70, 0, 90, .28)" : "rgba(110, 65, 0, .34)"} 10px);
  `}
`

const ClipLabel = styled.span`
  display: block;
  height: 10px;
  padding-left: 2px;
  font-size: 9px;
  line-height: 12px;
  color: #1c1408;
`

const ClipFoot = styled.div`
  height: 7px;
  border-top: 1px solid #2a2010;
  background: ${({ $ticks }) => ($ticks ? `repeating-linear-gradient(90deg, transparent 0 5px, #4a2a10 5px 6px, transparent 6px ${BAR}px)` : "none")};
`

const InnerShade = styled.div`
  position: absolute;
  z-index: 3;
  inset: 2px 0 0 0;
  pointer-events: none;
  box-shadow: inset 4px 0 6px rgba(0, 0, 0, .2), inset -4px 0 6px rgba(0, 0, 0, .1), inset 0 -3px 5px rgba(0, 0, 0, .15);
`

const MarkerLine = styled.span`
  position: absolute;
  z-index: 4;
  top: ${({ $playhead }) => ($playhead ? "28px" : "4px")};
  bottom: 0;
  width: 1px;
  background: #555;
`

const LocatorFlag = styled.span`
  position: absolute;
  z-index: 5;
  top: 2px;
`

const PlayheadFlag = styled.span`
  position: absolute;
  z-index: 5;
  top: 14px;
`

const Scrollbar = styled.div`
  position: absolute;
  z-index: 5;
  top: 78px;
  right: 2px;
  bottom: 3px;
  width: 10px;
  padding-top: 41px;
  border-radius: 5px;
  background: rgba(0, 0, 0, .2);
`

const ScrollThumb = styled.div`
  height: 72%;
  border: 1px solid #ddd;
  border-radius: 5px;
  background: #6e6e6e;
`

const ZoomRow = styled.div`
  flex: 0 0 30px;
  display: flex;
  align-items: center;
  padding-right: 3px;
  background: #ebebe7;
`

const ZoomTools = styled.div`
  flex: 0 0 84px;
  display: flex;
  gap: 9px;
  padding-left: 23px;
`

const WaveTools = styled.div`
  flex: 0 0 114px;
  display: flex;
  justify-content: center;
  gap: 2px;
`

const WaveButton = styled.button`
  width: 30px;
  height: 24px;
  display: flex;
  align-items: center;
  justify-content: center;
  background: ${({ $active }) => ($active ? "#656565" : "none")};
`

const Rule = styled.span`
  width: 1px;
  height: 24px;
  background: #bbb;
`

const ZoomButton = styled.button`
  flex: 0 0 74px;
  display: flex;
  flex-direction: column;
  align-items: center;
  gap: 3px;
  padding-top: 2px;
  font-size: 7px;
  line-height: 8px;
  font-weight: 700;
`

const Overview = styled.div`
  flex: 1;
  height: 24px;
  margin-left: 11px;
  display: flex;
  padding: 1px;
  border: 1px solid #aaa;
  border-radius: 12px;
  background: #fff;
`

const OverviewCap = styled.span`
  flex: 0 0 10px;
  background: #d8d8d6;
  border: 1px solid #999;
  border-radius: ${({ $right }) => ($right ? "0 10px 10px 0" : "10px 0 0 10px")};
`

const OverviewMap = styled.svg`
  flex: 1 !important;
  min-width: 0;
  height: 20px;
  background: #d9d9d9;
`

const TransportBar = styled.footer`
  flex: 0 0 26px;
  display: flex;
  overflow: hidden;
`

const Panel = styled.section`
  flex: ${({ $width }) => ($width ? `0 0 ${$width}px` : "1")};
  display: flex;
`

const Group = styled.div`
  flex: 0 0 ${({ $width }) => $width}px;
  height: 40px;
  margin-top: 3px;
  display: flex;
  flex-direction: column;
  align-items: ${({ $end }) => ($end ? "flex-end" : "center")};
  padding-top: ${({ $top = 3 }) => $top}px;
  padding-right: ${({ $end }) => ($end ? "8px" : "0")};
  border-right: ${({ $last }) => ($last ? "0" : "1px solid #bbb")};
  background: ${({ $dark }) => ($dark ? "#5c5c5c" : "none")};
`

const Tiny = styled.span`
  font-size: 7px;
  line-height: 9px;
  font-weight: 700;
`

const QuantizeValue = styled.span`
  font-size: 16px;
  line-height: 24px;
  font-weight: 700;
`

const SyncRow = styled.div`
  display: flex;
  align-items: center;
  gap: 16px;
  padding-left: 24px;
`

const SyncSelect = styled.select`
  appearance: none;
  font-size: 11px;
  line-height: 16px;
  font-weight: 700;
`

const Digits = styled.span`
  font-family: "Liberation Mono", monospace;
  font-size: 16px;
  line-height: 18px;
  font-weight: 700;
  color: #777;
`

const PositionGroup = styled.div`
  flex: 0 0 176px;
  height: 40px;
  margin-top: 3px;
  display: flex;
  align-items: flex-start;
  gap: 9px;
  padding: 10px 6px 0 26px;
  border-right: 1px solid #bbb;

  & > svg { margin-left: auto; }
`

const TempoGroup = styled.div`
  flex: 1;
  display: flex;
  align-items: flex-start;
  gap: 12px;
  padding: 5px 0 0 14px;
`

const ClickButton = styled.button`
  width: 23px;
`

const StopSquare = styled.span`
  width: 17px;
  height: 17px;
  background: #777;
`

const Tooltip = styled.span`
  position: absolute;
  z-index: 6;
  width: 72px;
  height: 20px;
  margin: 1px 0 0 36px;
  border: 1px solid #c9c59a;
  background: #fbf7b9;
`

const LoopDigits = styled.div`
  flex: 1;
  display: grid;
  grid-template-columns: 50px 28px 28px 37px 25px 10px;
  align-items: start;
  padding: 12px 0 0 13px;
`

const Status = styled.div`
  flex: 1;
  display: grid;
  grid-template-columns: 11px 36px 24px 19px 19px 13px;
  align-items: start;
  padding: 6px 0 0 9px;
`

const StatusLamp = styled.span`
  width: 9px;
  height: 11px;
  margin-top: 3px;
  background: #c6c6c3;
`

const StatusText = styled.span`
  font-size: 7px;
  line-height: 7px;
  padding-top: 3px;
  color: #d0d0cd;
`

const Meter = styled.span`
  width: 13px;
  height: 26px;
  padding: 1px;
  border: 1px solid #bbb;
  background-clip: content-box;
  background-color: #ebebe7;
  background-image: repeating-linear-gradient(transparent 0 3px, #ebebe7 3px 4px),
    linear-gradient(#ccc ${({ $peak }) => $peak}px, #777 ${({ $peak }) => $peak}px);
`

export default App;
